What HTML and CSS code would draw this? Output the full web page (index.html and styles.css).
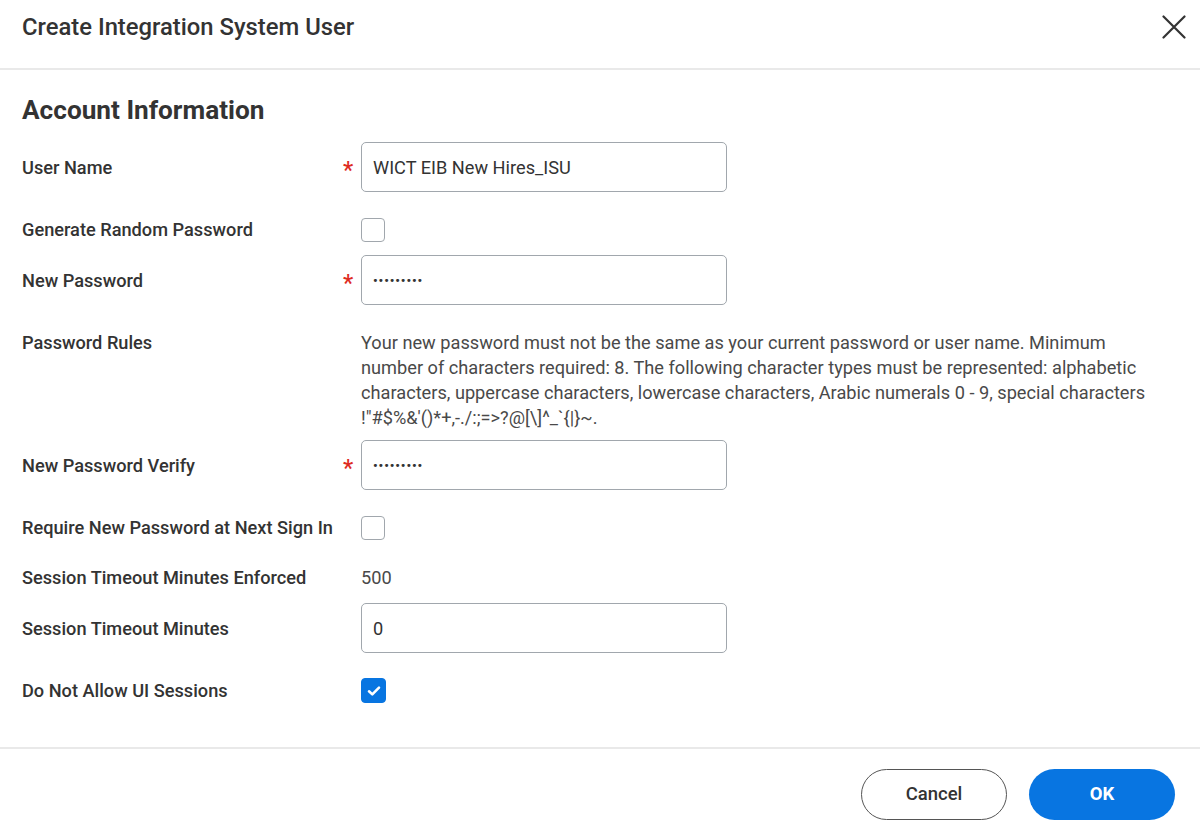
FILE: index.html
```html
<!DOCTYPE html>
<html lang="en">
<head>
<meta charset="utf-8">
<title>Create Integration System User</title>
<link rel="stylesheet" href="styles.css">
</head>
<body>
<div class="dialog">
  <header class="dlg-header">
    <h1 class="dlg-title">Create Integration System User</h1>
    <button class="close-btn" aria-label="Close">
      <svg width="24" height="24" viewBox="0 0 24 24"><path d="M1.5 1.5 L22.5 22.5 M22.5 1.5 L1.5 22.5" stroke="#333" stroke-width="2.2" stroke-linecap="round" fill="none"/></svg>
    </button>
  </header>

  <main class="dlg-body">
    <h2 class="section-title">Account Information</h2>
    <div class="form">
      <div class="row row-input">
        <div class="label">User Name</div>
        <div class="req">*</div>
        <input class="field" type="text" value="WICT EIB New Hires_ISU">
      </div>
      <div class="row row-check">
        <div class="label">Generate Random Password</div>
        <div class="req"></div>
        <span class="checkbox"></span>
      </div>
      <div class="row row-input">
        <div class="label">New Password</div>
        <div class="req">*</div>
        <div class="field pw">•••••••••</div>
      </div>
      <div class="row row-text">
        <div class="label">Password Rules</div>
        <div class="req"></div>
        <p class="rules">Your new password must not be the same as your current password or user name. Minimum number of characters required: 8. The following character types must be represented: alphabetic characters, uppercase characters, lowercase characters, Arabic numerals 0 - 9, special characters !"#$%&amp;'()*+,-./:;=&gt;?@[\]^_`{|}~.</p>
      </div>
      <div class="row row-input tight">
        <div class="label">New Password Verify</div>
        <div class="req">*</div>
        <div class="field pw">•••••••••</div>
      </div>
      <div class="row row-check">
        <div class="label">Require New Password at Next Sign In</div>
        <div class="req"></div>
        <span class="checkbox"></span>
      </div>
      <div class="row row-text">
        <div class="label">Session Timeout Minutes Enforced</div>
        <div class="req"></div>
        <div class="value">500</div>
      </div>
      <div class="row row-input">
        <div class="label">Session Timeout Minutes</div>
        <div class="req"></div>
        <input class="field" type="text" value="0">
      </div>
      <div class="row row-check">
        <div class="label">Do Not Allow UI Sessions</div>
        <div class="req"></div>
        <span class="checkbox checked">
          <svg width="14" height="12" viewBox="0 0 14 12"><path d="M2 6.3 L5.3 9.4 L12 2.6" stroke="#fff" stroke-width="2.6" fill="none" stroke-linecap="round" stroke-linejoin="round"/></svg>
        </span>
      </div>
    </div>
  </main>

  <footer class="dlg-footer">
    <button class="btn btn-cancel">Cancel</button>
    <button class="btn btn-ok">OK</button>
  </footer>
</div>
</body>
</html>
```

FILE: styles.css
```css
* { box-sizing: border-box; }

html, body {
  margin: 0;
  padding: 0;
  background: #fff;
}

body {
  font-family: Roboto, "Liberation Sans", Arial, sans-serif;
  color: #333;
  width: 1200px;
  height: 836px;
  overflow: hidden;
}

.dialog {
  display: flex;
  flex-direction: column;
  height: 836px;
}

.dlg-header {
  height: 70px;
  padding: 13px 14px 0 22px;
  display: flex;
  justify-content: space-between;
  align-items: flex-start;
  border-bottom: 2px solid #e9e9e9;
}

.dlg-title {
  margin: 0;
  font-size: 23.8px;
  line-height: 28px;
  font-weight: 500;
  color: #333;
}

.close-btn {
  border: 0;
  background: none;
  padding: 0;
  margin-top: 2px;
  width: 24px;
  height: 24px;
  cursor: pointer;
}

.close-btn svg { display: block; }

.dlg-body {
  flex: 1;
  padding: 25px 0 0 22px;
}

.section-title {
  margin: 0 0 17px 0;
  font-size: 26.2px;
  line-height: 30px;
  font-weight: 700;
  color: #333;
}

.form {
  display: flex;
  flex-direction: column;
}

.row {
  display: grid;
  grid-template-columns: 318px 21px 366px;
  align-items: center;
}

.row-input { margin-top: 13px; }
.row-input:first-child { margin-top: 0; }
.row-input.tight { margin-top: 10px; }
.row-check { margin-top: 25px; }
.row-text { margin-top: 25px; align-items: start; }

.label {
  font-size: 18.2px;
  line-height: 25px;
  font-weight: 500;
  color: #333;
  white-space: nowrap;
}

.req {
  color: #de2b1f;
  font-size: 23px;
  font-weight: 500;
  line-height: 25px;
  padding-top: 6px;
  text-align: left;
  padding-left: 3px;
}

.field {
  height: 50px;
  width: 366px;
  border: 1px solid #a1a7ad;
  border-radius: 5px;
  padding: 0 11px;
  font-family: Roboto, "Liberation Sans", Arial, sans-serif;
  font-size: 18.2px;
  color: #333;
  background: #fff;
  display: flex;
  align-items: center;
  outline: none;
}

.field.pw {
  font-size: 13px;
  font-weight: 700;
  letter-spacing: 0.9px;
  padding-top: 1px;
}

.checkbox {
  width: 24px;
  height: 24px;
  border: 1px solid #a1a7ad;
  border-radius: 4px;
  background: #fff;
  display: flex;
  align-items: center;
  justify-content: center;
}

.checkbox.checked {
  background: #0875e1;
  border-color: #0875e1;
  width: 25px;
  height: 25px;
}

.checkbox svg { display: block; }

.rules {
  width: 800px;
  margin: 0;
  font-size: 18.2px;
  line-height: 25px;
  color: #494949;
}

.value {
  font-size: 18.2px;
  line-height: 25px;
  color: #494949;
}

.dlg-footer {
  border-top: 2px solid #e9e9e9;
  height: 89px;
  padding: 20px 25px 0 0;
  display: flex;
  justify-content: flex-end;
  align-items: flex-start;
  gap: 22px;
}

.btn {
  width: 146px;
  height: 51px;
  border-radius: 26px;
  font-family: Roboto, "Liberation Sans", Arial, sans-serif;
  font-size: 18.5px;
  font-weight: 500;
  padding-bottom: 2px;
  cursor: pointer;
}

.btn-cancel {
  background: #fff;
  border: 1.5px solid #555;
  color: #333;
}

.btn-ok {
  background: #0875e1;
  border: 0;
  color: #fff;
  font-weight: 700;
}
```
